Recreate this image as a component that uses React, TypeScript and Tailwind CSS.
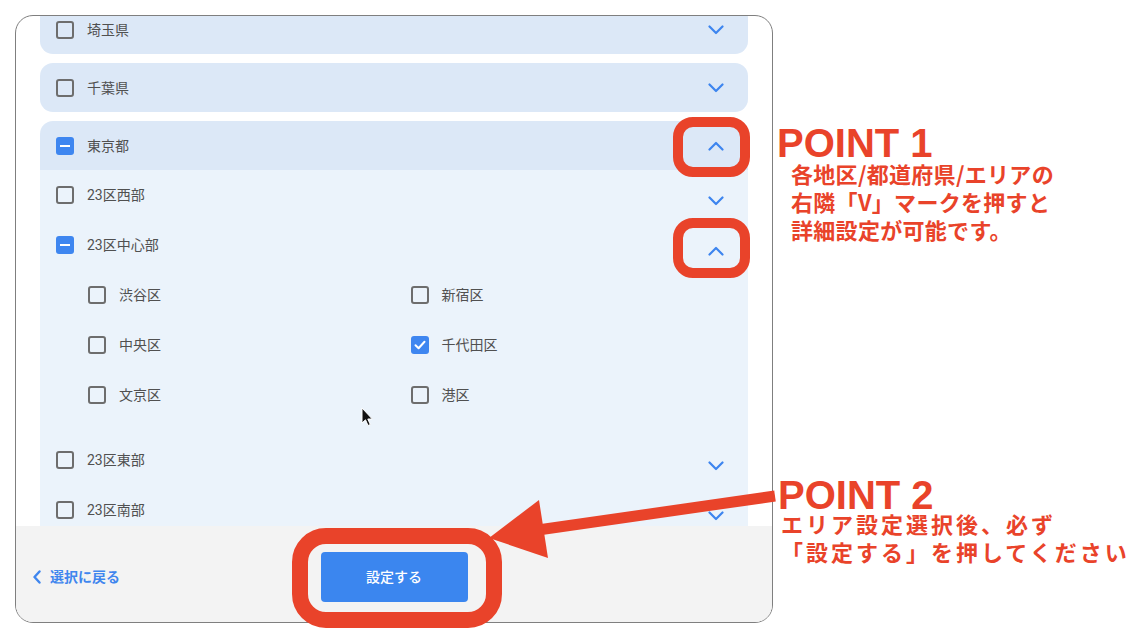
import React from "react";

const UI_FONT = 'Roboto, "Noto Sans CJK JP", "Noto Sans", sans-serif';
const JP_FONT = '"Noto Sans CJK JP", "Noto Sans", sans-serif';
const LATIN_BOLD = '"Liberation Sans", Arial, sans-serif';

function Chevron({ up = false, className = "" }: { up?: boolean; className?: string }) {
  return (
    <svg width="16" height="10" viewBox="0 0 16 10" className={className}>
      <path
        d={up ? "M1.5 8.5 L8 2 L14.5 8.5" : "M1.5 1.5 L8 8 L14.5 1.5"}
        fill="none"
        stroke="#3d85ef"
        strokeWidth="2.2"
        strokeLinecap="round"
        strokeLinejoin="round"
      />
    </svg>
  );
}

function Checkbox({ state }: { state: "off" | "on" | "mixed" }) {
  if (state === "off") {
    return <span className="block w-[18px] h-[18px] shrink-0 rounded-[3px] border-2 border-[#6d6d6d]" />;
  }
  return (
    <span className="flex w-[18px] h-[18px] shrink-0 items-center justify-center rounded-[3px] bg-[#3e86f0]">
      {state === "mixed" ? (
        <span className="block w-[10px] h-[2px] bg-white" />
      ) : (
        <svg width="14" height="14" viewBox="0 0 14 14">
          <path d="M2.5 7.2 L5.6 10.2 L11.5 3.8" fill="none" stroke="white" strokeWidth="2" strokeLinecap="round" strokeLinejoin="round" />
        </svg>
      )}
    </span>
  );
}

function Label({ children }: { children: React.ReactNode }) {
  return <span className="text-[14px] leading-none text-[#505050]">{children}</span>;
}

function CollapsedCard({ name }: { name: string }) {
  return (
    <div className="flex h-[49px] items-center rounded-[13px] bg-[#dce8f7] pl-4 pr-6">
      <Checkbox state="off" />
      <span className="ml-[13px]">
        <Label>{name}</Label>
      </span>
      <Chevron className="ml-auto" />
    </div>
  );
}

function SubRow({ name, state, open = false }: { name: string; state: "off" | "on" | "mixed"; open?: boolean }) {
  return (
    <div className="flex h-[50px] items-center pl-4 pr-6">
      <Checkbox state={state} />
      <span className="ml-[13px]">
        <Label>{name}</Label>
      </span>
      <Chevron up={open} className="ml-auto mt-3" />
    </div>
  );
}

function Ward({ name, state }: { name: string; state: "off" | "on" }) {
  return (
    <div className="flex h-[50px] items-center gap-[13px]">
      <Checkbox state={state} />
      <Label>{name}</Label>
    </div>
  );
}

export default function App() {
  return (
    <div className="relative h-[640px] w-[1138px] overflow-hidden bg-white" style={{ fontFamily: UI_FONT }}>
      <div className="pl-[15px] pt-[15px]">
        <div className="flex h-[608px] w-[758px] flex-col overflow-hidden rounded-[18px] border border-[#7f7f7f] bg-white">
          <div className="flex-1 overflow-hidden px-6">
            <div className="-mt-[11px] flex flex-col gap-[9px]">
              <CollapsedCard name="埼玉県" />
              <CollapsedCard name="千葉県" />
              <div className="overflow-hidden rounded-[13px]">
                <div className="flex h-[49px] items-center bg-[#dce8f7] pl-4 pr-6">
                  <Checkbox state="mixed" />
                  <span className="ml-[13px]">
                    <Label>東京都</Label>
                  </span>
                  <Chevron up className="ml-auto" />
                </div>
                <div className="bg-[#ebf3fb] pb-8">
                  <SubRow name="23区西部" state="off" />
                  <SubRow name="23区中心部" state="mixed" open />
                  <div className="grid grid-cols-2 pl-12 pr-[15px]">
                    <Ward name="渋谷区" state="off" />
                    <Ward name="新宿区" state="off" />
                    <Ward name="中央区" state="off" />
                    <Ward name="千代田区" state="on" />
                    <Ward name="文京区" state="off" />
                    <Ward name="港区" state="off" />
                  </div>
                  <div className="h-[15px]" />
                  <SubRow name="23区東部" state="off" />
                  <SubRow name="23区南部" state="off" />
                </div>
              </div>
            </div>
          </div>
          <div className="grid h-[96px] shrink-0 grid-cols-[1fr_auto_1fr] items-center bg-[#f3f3f3] px-4 pt-[6px]">
            <div className="flex items-center gap-[8px] text-[#3f86ee]">
              <svg width="10" height="14" viewBox="0 0 10 14">
                <path d="M7.5 1.5 L2.5 7 L7.5 12.5" fill="none" stroke="#3f86ee" strokeWidth="2.4" strokeLinecap="round" strokeLinejoin="round" />
              </svg>
              <span className="text-[14px] font-bold leading-none">選択に戻る</span>
            </div>
            <button className="flex h-[50px] w-[147px] items-center justify-center rounded-[4px] bg-[#3b86ef] text-[14px] font-medium text-white">
              設定する
            </button>
            <div />
          </div>
        </div>
      </div>

      {/* annotation boxes */}
      <div className="pointer-events-none absolute left-[673px] top-[117px] h-[60px] w-[77px] rounded-[20px] border-[10px] border-[#e9432a]" />
      <div className="pointer-events-none absolute left-[673px] top-[218px] h-[60px] w-[77px] rounded-[20px] border-[10px] border-[#e9432a]" />
      <div className="pointer-events-none absolute left-[292px] top-[528px] h-[100px] w-[210px] rounded-[34px] border-[16px] border-[#e9432a]" />

      {/* arrow and cursor */}
      <svg className="pointer-events-none absolute left-0 top-0" width="1138" height="640" viewBox="0 0 1138 640">
        <line x1="538" y1="530" x2="775" y2="496" stroke="#e9432a" strokeWidth="11" />
        <polygon points="489,538 539,500 548,558" fill="#e9432a" />
        <path d="M362 408 L362 423 L365.5 419.8 L368 425.5 L370.3 424.5 L367.8 419 L372.3 419 Z" fill="#111" stroke="#fff" strokeWidth="1" strokeLinejoin="round" />
      </svg>

      {/* POINT 1 */}
      <div className="absolute left-[777px] top-[129px] text-[40px] font-bold leading-[28px] text-[#e9432a]" style={{ fontFamily: LATIN_BOLD }}>
        POINT 1
      </div>
      <div className="absolute left-[791px] top-[159px] text-[22px] font-bold leading-[28px] tracking-[0.3px] text-[#e9432a]" style={{ fontFamily: JP_FONT }}>
        <div>各地区/都道府県/エリアの</div>
        <div>右隣「V」マークを押すと</div>
        <div>詳細設定が可能です。</div>
      </div>

      {/* POINT 2 */}
      <div className="absolute left-[778px] top-[481px] text-[40px] font-bold leading-[28px] text-[#e9432a]" style={{ fontFamily: LATIN_BOLD }}>
        POINT 2
      </div>
      <div className="absolute left-[781px] top-[509px] text-[22px] font-bold leading-[28px] tracking-[3px] text-[#e9432a]" style={{ fontFamily: JP_FONT }}>
        <div>エリア設定選択後、必ず</div>
        <div>「設定する」を押してください</div>
      </div>
    </div>
  );
}
